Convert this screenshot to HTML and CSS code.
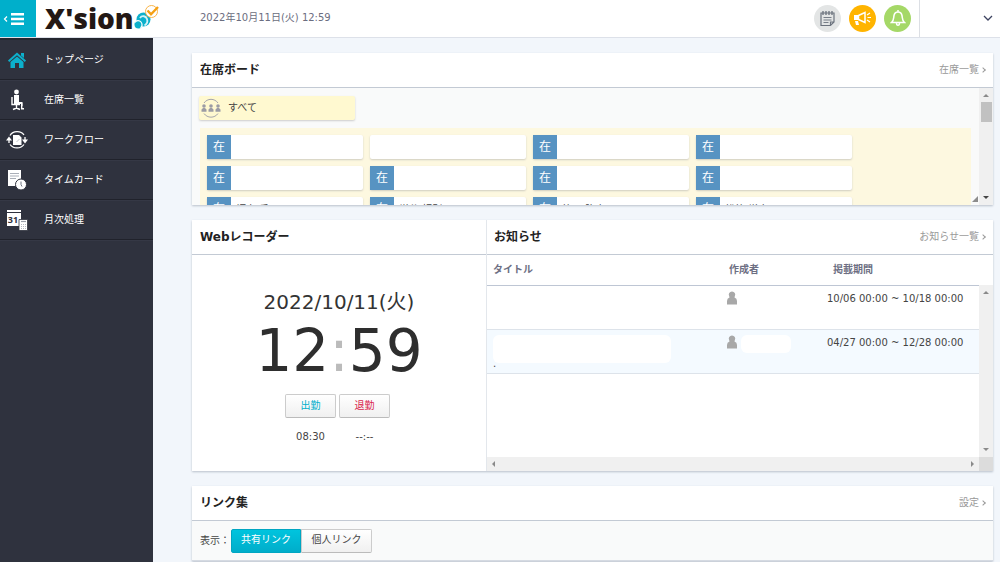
FILE: index.html
```html
<!DOCTYPE html>
<html lang="ja">
<head>
<meta charset="utf-8">
<meta name="viewport" content="width=device-width, initial-scale=1">
<title>X'sion</title>
<link rel="stylesheet" href="styles.css">
</head>
<body>
<header class="topbar">
  <button class="menu-toggle" type="button" aria-label="メニュー">
    <svg width="22" height="14" viewBox="0 0 22 14"><path d="M4 4.5 1.5 7 4 9.5" fill="none" stroke="#fff" stroke-width="1.2"/><path d="M8 2.2h13M8 7h13M8 11.8h13" stroke="#fff" stroke-width="2.4"/></svg>
  </button>
  <a class="logo" href="#" aria-label="X'sion">
    <span class="logo-text">X'sion</span>
    <svg class="logo-mark" width="26" height="26" viewBox="0 0 26 26">
      <circle cx="9.500" cy="15.500" r="7" fill="#0cb0cc"/>
      <circle cx="4.500" cy="20.500" r="4" fill="#0cb0cc"/>
      <path d="M1 18.500c1-2.500 4.500-2.500 6-.5s1.500 4-.5 6" fill="none" stroke="#fff" stroke-width="1.200"/>
      <path d="M6 14c2-3 6-2 7 1s0 5-2.500 6.500" fill="none" stroke="#d5f2f7" stroke-width="1.800"/>
      <circle cx="17.500" cy="7.500" r="6" fill="#fff" stroke="#f9b54a" stroke-width="1"/>
      <path d="m13.500 6.500 3.500 3.800L24 3" fill="none" stroke="#f5a013" stroke-width="2.400"/>
    </svg>
  </a>
  <time class="now" datetime="2022-10-11T12:59">2022年10月11日(火) 12:59</time>
  <div class="actions">
    <button class="round round-note" type="button" aria-label="メモ">
      <svg width="17" height="17" viewBox="0 0 17 17" fill="none" stroke="#6b727d"><path d="M2 3h13v9l-3.500 3.500H2zM15 12h-3.500v3.500" stroke-width="1.200"/><path d="M4 1v4M7 1v4M10 1v4M13 1v4" stroke-width="1.300"/><path d="M4.500 7.500h8M4.500 10h8M4.500 12.500h5" stroke-width=".9"/></svg>
    </button>
    <button class="round round-news" type="button" aria-label="お知らせ">
      <svg width="19" height="15" viewBox="0 0 19 15"><path d="M1 4h4v5H1zM2 10h3l1 4H3z" fill="#fff"/><path d="M5.500 4.500 12 1.500v10L5.500 8.500z" fill="none" stroke="#fff" stroke-width="1.500"/><path d="m14 4 3-2M14.500 6.500H18M14 9l3 2" stroke="#fff" stroke-width="1.200"/></svg>
    </button>
    <button class="round round-bell" type="button" aria-label="通知">
      <svg width="16" height="18" viewBox="0 0 16 18" fill="none" stroke="#fff" stroke-width="1.500"><path d="M1.500 13.500C4 11.500 3.500 9 4 6.500 4.500 4 6 3 8 3s3.500 1 4 3.500c.5 2.500 0 5 2.500 7zM8 3V1"/><path d="M6.500 14c0 3 3 3 3 0"/></svg>
    </button>
  </div>
  <button class="account" type="button" aria-label="アカウント">
    <svg width="10" height="6" viewBox="0 0 10 6"><path d="m1 1 4 4 4-4" fill="none" stroke="#3d4360" stroke-width="1.300"/></svg>
  </button>
</header>

<div class="layout">
  <nav class="sidebar">
    <a href="#"><svg width="22" height="22" viewBox="0 0 22 22" fill="#0cb0cc"><path d="M2 11.500 11 3.500l9 8-1.200 1.400L11 6.200l-7.800 6.700z"/><path d="M15 4h3v5l-3-2.500zM4.500 13 11 7.500l6.500 5.500v6H13v-5H9v5H4.500z"/></svg><span>トップページ</span></a>
    <a href="#"><svg width="22" height="22" viewBox="0 0 22 22" fill="#fff"><circle cx="10.500" cy="3" r="2.400"/><path d="M8 6h5v7h3.500v4H15v-2H8z"/><path d="M6 8v7.500h8M10.500 16v4M7 20.500l3.500-1.500 3.500 1.500M15.700 14v5.700H18" fill="none" stroke="#fff" stroke-width="1.400"/></svg><span>在席一覧</span></a>
    <a href="#"><svg width="22" height="22" viewBox="0 0 22 22"><path d="M4 6.500C7 1.500 15 1.500 18 6M18 15.500c-3 4.500-11 4.500-14 0M3 14v-4M19 8v3" fill="none" stroke="#fff" stroke-width="1.300"/><path d="m0 11.500 3-4 3 4zM16 10.500h6l-3 4zM7 6h6l2.500 2.500V16H7z" fill="#fff"/><path d="m10.500 13 3-3" stroke="#aeb2bb" stroke-width=".8"/></svg><span>ワークフロー</span></a>
    <a href="#"><svg width="22" height="22" viewBox="0 0 22 22"><path d="M2 1h13v16H2z" fill="#fff"/><path d="M4 4.500h9M4 7h9M4 9.500h6" stroke="#aaafb8" stroke-width="1"/><circle cx="15" cy="15.500" r="5.500" fill="#fff" stroke="#2f323e" stroke-width="1"/><path d="M15 12.500v3l1 2" fill="none" stroke="#6f7480" stroke-width="1"/></svg><span>タイムカード</span></a>
    <a href="#"><svg width="22" height="22" viewBox="0 0 22 22"><path d="M1 1h14v2H1zM1 4h14v13H1z" fill="#fff"/><text class="cal-day" x="7" y="14" text-anchor="middle" fill="#2f323e">31</text><path d="M13 10.500h8.500v11H13z" fill="#fff" stroke="#2f323e" stroke-width=".8"/><path d="M15 12.500h5" stroke="#999ea8" stroke-width="1.200"/><path d="M15 15.500h5M15 17.500h5M15 19.500h5" stroke="#b4b8c0" stroke-width="1" stroke-dasharray="1 1"/></svg><span>月次処理</span></a>
  </nav>

  <main class="content">
    <section class="card">
      <div class="card-head"><h2>在席ボード</h2><a href="#">在席一覧 <i class="chev"></i></a></div>
      <div class="board">
        <div class="board-view">
          <button class="group" type="button">
            <svg width="20" height="20" viewBox="0 0 20 20"><path d="M3 5a8.500 8.500 0 0 1 14 0M3 15.500a8.500 8.500 0 0 0 14 0" fill="none" stroke="#a5a5ab" stroke-width="1"/><g fill="#9c9ca4"><circle cx="3" cy="8" r="1.800"/><circle cx="10" cy="8" r="1.800"/><circle cx="17" cy="8" r="1.800"/><path d="M.5 13.800V11.500q2.500-3.500 5 0v2.300zM7.500 13.800V11.500q2.500-3.500 5 0v2.300zM14.500 13.800V11.500q2.500-3.500 5 0v2.300z"/></g></svg>
            <span>すべて</span>
          </button>
          <ul class="seats">
            <li><b>在</b></li><li></li><li><b>在</b></li><li><b>在</b></li>
            <li><b>在</b></li><li><b>在</b></li><li><b>在</b></li><li><b>在</b></li>
            <li><b>在</b><span>坂上 香</span></li><li><b>在</b><span>増谷 好則</span></li><li><b>在</b><span>竹田 隆之</span></li><li><b>在</b><span>松竹 増実</span></li>
          </ul>
          <svg class="grip" width="6" height="6" viewBox="0 0 6 6"><path d="M6 0v6H0z" fill="#8c8c8c"/></svg>
        </div>
        <div class="vbar"><i class="up"></i><i class="thumb"></i><i class="down dark"></i></div>
      </div>
    </section>

    <section class="card split">
      <div class="recorder">
        <div class="card-head"><h2>Webレコーダー</h2></div>
        <div class="clock">
          <div class="clock-date">2022/10/11(火)</div>
          <div class="clock-time">12<span>:</span>59</div>
          <div class="punch">
            <button class="btn in" type="button">出勤</button>
            <button class="btn out" type="button">退勤</button>
            <span>08:30</span>
            <span>--:--</span>
          </div>
        </div>
      </div>
      <div class="news">
        <div class="card-head"><h2>お知らせ</h2><a href="#">お知らせ一覧 <i class="chev"></i></a></div>
        <div class="news-body">
          <table>
            <thead><tr><th class="c-title">タイトル</th><th class="c-author">作成者</th><th class="c-term">掲載期間</th></tr></thead>
            <tbody>
              <tr><td></td><td><svg class="person" width="10" height="14" viewBox="0 0 10 14"><path d="M5 .5a3.200 3.200 0 0 1 2.800 4.800L7.500 6.500q2.500.8 2.500 3.500v3.500H0V10q0-2.700 2.500-3.500l-.3-1.200A3.200 3.200 0 0 1 5 .5z" fill="#a8a8a8"/></svg></td><td>10/06 00:00 ~ 10/18 00:00</td></tr>
              <tr class="alt"><td><div class="blank blank-title"></div><div class="dot">.</div></td><td><div class="author"><svg class="person" width="10" height="14" viewBox="0 0 10 14"><path d="M5 .5a3.200 3.200 0 0 1 2.800 4.800L7.500 6.500q2.500.8 2.500 3.500v3.500H0V10q0-2.700 2.500-3.500l-.3-1.200A3.200 3.200 0 0 1 5 .5z" fill="#a8a8a8"/></svg><div class="blank blank-author"></div></div></td><td>04/27 00:00 ~ 12/28 00:00</td></tr>
            </tbody>
          </table>
          <div class="vbar"><i class="up"></i><i class="down"></i></div>
          <div class="hbar"><i class="left"></i><i class="right"></i></div>
          <div class="corner"></div>
        </div>
      </div>
    </section>

    <section class="card">
      <div class="card-head"><h2>リンク集</h2><a href="#">設定 <i class="chev"></i></a></div>
      <div class="links">
        <span>表示：</span>
        <div class="tabs"><button class="btn tab on" type="button">共有リンク</button><button class="btn tab" type="button">個人リンク</button></div>
      </div>
    </section>
  </main>
</div>
</body>
</html>
```
FILE: styles.css
```css
* { box-sizing: border-box; }
body {
  margin: 0;
  min-height: 100vh;
  display: flex;
  flex-direction: column;
  background: #f2f6fb;
  color: #444;
  font: 10px/16px "DejaVu Sans", "Noto Sans CJK JP", sans-serif;
  overflow: hidden;
}
button { font: inherit; color: inherit; border: 0; padding: 0; background: none; cursor: pointer; }
a { color: inherit; text-decoration: none; }
svg { display: block; flex: none; }
h2 { margin: 0; font-size: 12px; line-height: 18px; color: #222; }

.topbar { display: flex; align-items: stretch; height: 38px; background: #fff; border-bottom: 1px solid #dde1e9; }
.menu-toggle { width: 36px; background: #00afcb; display: flex; align-items: center; padding-left: 3px; }
.logo { width: 164px; padding-left: 9px; display: flex; align-items: flex-start; color: #231815; }
.logo-text { font: 800 28px/36px "Open Sans", "Noto Sans", sans-serif; }
.logo-mark { margin-top: 4px; }
.now { align-self: center; flex: 1; color: #6b6d80; padding-bottom: 2px; }
.actions { display: flex; align-items: center; gap: 8px; padding: 0 8px 1px 0; }
.round { width: 27px; height: 27px; border-radius: 50%; display: grid; place-items: center; }
.round-note { background: #e3e5e5; }
.round-news { background: #ffb400; }
.round-bell { background: #a5d867; }
.account { width: 81px; border-left: 1px solid #dcdfe4; display: flex; align-items: center; justify-content: flex-end; padding: 0 7px 2px 0; }

.layout { flex: 1; display: flex; }
.sidebar { width: 153px; flex: none; background: #2f323e; border-top: 2px solid #24262f; }
.sidebar a { display: flex; align-items: center; gap: 16px; height: 40px; padding: 0 6px; color: #fff; border-bottom: 1px solid #20222b; box-shadow: 0 1px #353845; }
.cal-day { font: 700 9px "Noto Sans", sans-serif; }

.content { flex: 1; min-width: 0; padding: 15px 7px 0 39px; display: flex; flex-direction: column; gap: 15px; }
.card { background: #fff; box-shadow: 0 1px 2px #b9c0cb; }
.card-head { display: flex; align-items: center; justify-content: space-between; height: 35px; padding: 0 8px; border-bottom: 1px solid #c3cad4; }
.card-head a { color: #999; display: flex; align-items: center; gap: 2px; }
.chev { width: 4px; height: 4px; border: solid #999; border-width: 1px 1px 0 0; transform: rotate(45deg); }

.board { display: flex; height: 117px; background: #f9fafa; }
.board-view { position: relative; flex: 1; overflow: hidden; padding: 8px 8px 0 7px; }
.group { display: flex; align-items: center; gap: 7px; width: 156px; height: 24px; padding: 0 2px; background: #fff9d0; border-radius: 2px; box-shadow: 0 1px 2px #ccc; }
.seats { list-style: none; margin: 8px 0 0 1px; padding: 7px; display: grid; grid-template-columns: repeat(4, 156px); gap: 7px; background: #fdf8e0; }
.seats li { display: flex; align-items: center; gap: 5px; height: 24px; background: #fff; border-radius: 2px; box-shadow: 0 1px 2px #cfcdc0; }
.seats span { padding-top: 2px; }
.seats b { width: 24px; height: 24px; background: #5793c2; color: #fff; font-weight: 400; font-size: 12px; line-height: 24px; text-align: center; }
.grip { position: absolute; right: 1px; bottom: 3px; }

.vbar { width: 14px; background: #f0f0f0; display: flex; flex-direction: column; align-items: center; padding: 6px 0; }
.vbar i, .hbar i { border: 3px solid transparent; }
.vbar .up { border-bottom-color: #8a8a8a; border-top-width: 0; }
.vbar .down { border-top-color: #8a8a8a; border-bottom-width: 0; margin-top: auto; }
.vbar .dark { border-top-color: #444; }
.hbar .left { border-right-color: #8a8a8a; border-left-width: 0; }
.hbar .right { border-left-color: #8a8a8a; border-right-width: 0; }
.vbar .thumb { width: 11px; height: 20px; margin-top: 5px; background: #c1c1c1; border: 0; }
.hbar { background: #f0f0f0; display: flex; align-items: center; justify-content: space-between; padding: 0 5px; }
.corner { background: #dcdcdc; }

.split { display: flex; min-height: 251px; }
.recorder { flex: 0 0 294px; display: flex; flex-direction: column; }
.news { flex: 1; display: flex; flex-direction: column; border-left: 1px solid #e3e7ec; }
.news .card-head { padding-left: 7px; }
.clock { padding-top: 33px; display: flex; flex-direction: column; align-items: center; color: #333; }
.clock-date { font-size: 20px; line-height: 28px; }
.clock-time { font-size: 58px; line-height: 70px; color: #2e2e2e; }
.clock-time span { color: #bbb; }
.punch { display: grid; grid-template-columns: 51px 51px; column-gap: 3px; row-gap: 11px; text-align: center; padding: 8px 3px 0 0; color: #444; }
.btn { height: 24px; border: 1px solid #ccc; border-bottom-color: #bbb; border-radius: 2px; background: linear-gradient(#fff, #f0f0f0); padding-bottom: 1px; }
.in { color: #00afcb; }
.out { color: #d9244c; }

.news-body { flex: 1; display: grid; grid-template-columns: 1fr 14px; grid-template-rows: 30px 1fr 14px; }
table { grid-area: 1 / 1 / 3 / 3; align-self: start; width: 100%; border-collapse: collapse; table-layout: fixed; }
.news-body .vbar { grid-area: 2 / 2; z-index: 1; }
.hbar { grid-area: 3 / 1; }
.corner { grid-area: 3 / 2; }
th { height: 30px; padding: 0 6px; text-align: left; color: #6d6f83; border-bottom: 1px solid #bec6d4; }
.c-title { width: 234px; }
.c-author { width: 99px; padding-left: 8px; }
.c-term { padding-left: 13px; }
td { height: 44px; padding: 5px 0 0 6px; vertical-align: top; border-bottom: 1px solid #dde3ea; }
td:last-child { padding-left: 7px; }
.alt { background: #f4faff; }
.author { display: flex; gap: 4px; }
.blank { background: #fff; border-radius: 6px; }
.blank-title { width: 178px; height: 28px; }
.blank-author { width: 50px; height: 18px; }
.dot { line-height: 1px; }

.links { display: flex; align-items: center; gap: 1px; height: 40px; padding: 0 8px; background: #f9fafa; border-bottom: 1px solid #d5dae2; }
.tabs { display: flex; }
.tab { width: 71px; border-radius: 0 2px 2px 0; }
.tab.on { width: 70px; color: #fff; border-color: #00a6c2; background: linear-gradient(#00c4de, #00adca); border-radius: 2px 0 0 2px; }
```
